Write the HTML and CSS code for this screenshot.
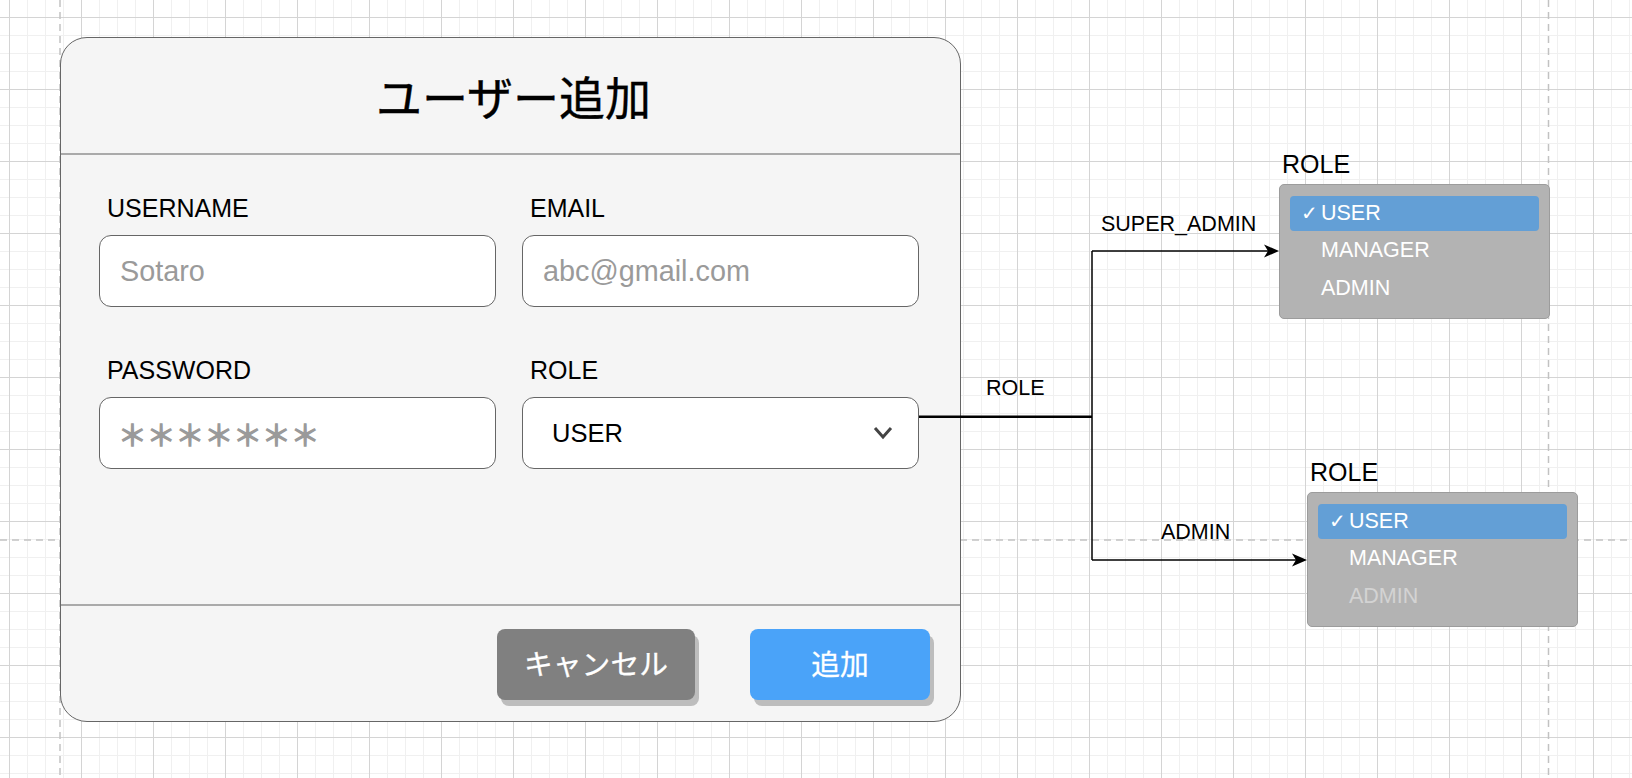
FILE: index.html
```html
<!DOCTYPE html>
<html lang="ja">
<head>
<meta charset="utf-8">
<title>ユーザー追加</title>
<link rel="stylesheet" href="styles.css">
</head>
<body>
<div class="canvas">
  <svg class="guides" width="1632" height="778" viewBox="0 0 1632 778">
    <line x1="60" y1="0" x2="60" y2="778"/>
    <line x1="1548.5" y1="0" x2="1548.5" y2="778"/>
    <line x1="0" y1="540" x2="1632" y2="540"/>
  </svg>

  <section class="dialog">
    <header class="dlg-head">
      <h1 class="dlg-title">ユーザー追加</h1>
    </header>
    <div class="dlg-body">
      <div class="field">
        <div class="field-label">USERNAME</div>
        <div class="input"><span class="placeholder">Sotaro</span></div>
      </div>
      <div class="field">
        <div class="field-label">EMAIL</div>
        <div class="input"><span class="placeholder">abc@gmail.com</span></div>
      </div>
      <div class="field">
        <div class="field-label">PASSWORD</div>
        <div class="input input-pass"><span class="mask">＊＊＊＊＊＊＊</span></div>
      </div>
      <div class="field">
        <div class="field-label">ROLE</div>
        <div class="input input-select">
          <span class="select-value">USER</span>
          <svg class="chevron" width="20" height="14" viewBox="0 0 20 14"><polyline points="2,2 10,11 18,2"/></svg>
        </div>
      </div>
    </div>
    <footer class="dlg-foot">
      <button class="btn btn-cancel">キャンセル</button>
      <button class="btn btn-add">追加</button>
    </footer>
  </section>

  <div class="node node-a">
    <div class="node-label">ROLE</div>
    <ul class="menu">
      <li class="menu-item selected"><span class="check">✓</span>USER</li>
      <li class="menu-item"><span class="check"></span>MANAGER</li>
      <li class="menu-item"><span class="check"></span>ADMIN</li>
    </ul>
  </div>

  <div class="node node-b">
    <div class="node-label">ROLE</div>
    <ul class="menu">
      <li class="menu-item selected"><span class="check">✓</span>USER</li>
      <li class="menu-item"><span class="check"></span>MANAGER</li>
      <li class="menu-item disabled"><span class="check"></span>ADMIN</li>
    </ul>
  </div>

  <span class="edge-label el-super">SUPER_ADMIN</span>
  <span class="edge-label el-role">ROLE</span>
  <span class="edge-label el-admin">ADMIN</span>

  <svg class="edges" width="1632" height="778" viewBox="0 0 1632 778">
    <path class="wire wire-double" d="M919 416.8 H1092"/>
    <path class="wire" d="M1092 251 V560"/>
    <path class="wire" d="M1092 251 H1268"/>
    <path class="wire" d="M1092 560 H1296"/>
    <polygon class="head" points="1279,251 1264,244.5 1268,251 1264,257.5"/>
    <polygon class="head" points="1307,560 1292,553.5 1296,560 1292,566.5"/>
  </svg>
</div>
</body>
</html>
```

FILE: styles.css
```css
html, body {
  margin: 0;
  padding: 0;
}

body {
  width: 1632px;
  height: 778px;
  overflow: hidden;
  font-family: "Liberation Sans", Arial, sans-serif;
  color: #000;
  background: #fff;
}

.canvas {
  position: relative;
  width: 1632px;
  height: 778px;
  background-color: #fff;
  background-image:
    linear-gradient(to right, #d4d4d4 1px, transparent 1px),
    linear-gradient(to bottom, #d4d4d4 1px, transparent 1px),
    linear-gradient(to right, #f0f0f0 1px, transparent 1px),
    linear-gradient(to bottom, #f0f0f0 1px, transparent 1px);
  background-size: 72px 72px, 72px 72px, 18px 18px, 18px 18px;
  background-position: 9px 17px, 9px 17px, 9px 17px, 9px 17px;
}

.guides, .edges {
  position: absolute;
  left: 0;
  top: 0;
  pointer-events: none;
}

.guides line {
  stroke: #c2c2c2;
  stroke-width: 1.5;
  stroke-dasharray: 7 5;
}

.edges .wire {
  fill: none;
  stroke: #000;
  stroke-width: 1.5;
}

.edges .wire-double {
  stroke-width: 2.6;
}

.edges .head {
  fill: #000;
}

/* ---------- dialog ---------- */
.dialog {
  position: absolute;
  left: 60px;
  top: 37px;
  width: 901px;
  height: 685px;
  box-sizing: border-box;
  border: 1px solid #666;
  border-radius: 27px;
  background: #f5f5f5;
  display: flex;
  flex-direction: column;
}

.dlg-head {
  height: 117px;
  box-sizing: border-box;
  border-bottom: 2px solid #aaa;
  display: flex;
  justify-content: center;
  padding-left: 6px;
}

.dlg-title {
  margin: 0;
  font-family: "Noto Sans CJK JP", sans-serif;
  font-weight: 400;
  font-size: 46px;
  line-height: 115px;
  -webkit-text-stroke: 0.4px #000;
}

.dlg-body {
  flex: 1;
  box-sizing: border-box;
  padding: 39px 0 0 38px;
  display: grid;
  grid-template-columns: 397px 397px;
  column-gap: 26px;
  row-gap: 49px;
  align-content: start;
}

.field {
  display: flex;
  flex-direction: column;
}

.field-label {
  font-size: 25px;
  line-height: 28px;
  height: 28px;
  margin-bottom: 13px;
  padding-left: 8px;
}

.input {
  height: 72px;
  box-sizing: border-box;
  border: 1px solid #666;
  border-radius: 12px;
  background: #fff;
  display: flex;
  align-items: center;
  padding-left: 20px;
}

.placeholder {
  font-size: 28.8px;
  color: #9a9a9a;
}

.input-pass {
  padding-left: 18px;
}

.mask {
  font-family: "Noto Sans CJK JP", sans-serif;
  font-weight: 400;
  font-size: 28.8px;
  color: #9a9a9a;
  line-height: 1;
  padding-top: 2px;
  -webkit-text-stroke: 1.3px #9a9a9a;
}

.input-select {
  padding-left: 29px;
  padding-right: 25px;
  justify-content: space-between;
}

.select-value {
  font-size: 25.5px;
}

.chevron polyline {
  fill: none;
  stroke: #444;
  stroke-width: 3;
}

.dlg-foot {
  height: 117px;
  box-sizing: border-box;
  border-top: 2px solid #aaa;
  display: flex;
  justify-content: flex-end;
  align-items: flex-start;
  gap: 55px;
  padding: 23px 30px 0 0;
}

.btn {
  height: 71px;
  border: none;
  border-radius: 8px;
  color: #fff;
  font-family: "Noto Sans CJK JP", sans-serif;
  font-weight: 400;
  font-size: 28.8px;
  box-shadow: 4px 6px 0 #bdbdbd;
  padding: 0 0 5px 0;
  -webkit-text-stroke: 0.3px #fff;
}

.btn-cancel {
  width: 198px;
  background: #808080;
}

.btn-add {
  width: 180px;
  background: #4aa3f9;
}

/* ---------- dropdown nodes ---------- */
.node {
  position: absolute;
  display: flex;
  flex-direction: column;
}

.node-a {
  left: 1279px;
  top: 150px;
}

.node-b {
  left: 1307px;
  top: 458px;
}

.node-label {
  font-size: 25px;
  line-height: 28px;
  height: 28px;
  margin: 0 0 6px 3px;
}

.menu {
  list-style: none;
  margin: 0;
  width: 271px;
  height: 135px;
  box-sizing: border-box;
  padding: 11px 10px 0 10px;
  background: #b3b3b3;
  border: 1.5px solid #9c9c9c;
  border-radius: 5px;
  color: #fff;
  font-size: 21.5px;
}

.menu-item {
  height: 37px;
  line-height: 37px;
  margin-top: 1px;
  display: flex;
  padding-left: 11px;
}

.menu-item.selected {
  height: 35px;
  line-height: 35px;
  margin-top: 0;
  background: #639fd6;
  border-radius: 4px;
}

.menu-item.disabled {
  color: #d3d3d3;
}

.check {
  width: 20px;
  flex: none;
  font-family: "DejaVu Sans", sans-serif;
  font-weight: 700;
  font-size: 20px;
}

/* ---------- edge labels ---------- */
.edge-label {
  position: absolute;
  font-size: 21.5px;
  line-height: 25px;
  white-space: nowrap;
}

.el-super {
  left: 1101px;
  top: 212px;
}

.el-role {
  left: 986px;
  top: 376px;
}

.el-admin {
  left: 1161px;
  top: 520px;
}
```
